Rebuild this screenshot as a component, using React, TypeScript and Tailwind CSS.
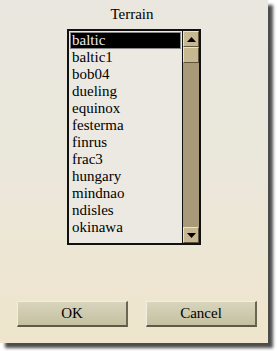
const terrains = [
  "baltic",
  "baltic1",
  "bob04",
  "dueling",
  "equinox",
  "festerma",
  "finrus",
  "frac3",
  "hungary",
  "mindnao",
  "ndisles",
  "okinawa",
];

function ScrollButton({ dir }: { dir: "up" | "down" | "none" }) {
  return (
    <div className="h-[16px] w-full flex items-center justify-center bg-[#c7b892] border-t border-l border-[#ece2c6] border-b border-r border-b-[#5f553d] border-r-[#5f553d]">
      {dir === "up" && (
        <svg width="9" height="5" viewBox="0 0 9 5">
          <polygon points="0,5 9,5 4.5,0" fill="#000" />
        </svg>
      )}
      {dir === "down" && (
        <svg width="9" height="5" viewBox="0 0 9 5">
          <polygon points="0,0 9,0 4.5,5" fill="#000" />
        </svg>
      )}
    </div>
  );
}

function Button({ label }: { label: string }) {
  return (
    <button className="w-[111px] h-[26px] flex items-center justify-center bg-gradient-to-b from-[#d8d5bd] to-[#c4c0a1] border-t border-l border-[#f1eee0] border-b-2 border-r-2 border-b-[#5d5a48] border-r-[#6a6653] font-['Liberation_Serif',serif] text-[15px] leading-none text-black">
      {label}
    </button>
  );
}

export default function App() {
  return (
    <div className="w-[277px] h-[351px] bg-white">
      <div className="relative w-[268px] h-[343px] flex flex-col bg-gradient-to-b from-[#e9e7df] via-[#ebe7db] to-[#efe5cc] shadow-[5px_5px_3px_rgba(0,0,0,0.7)] font-['Liberation_Serif',serif]">
        <div className="pt-[6px] pr-[4px] text-center text-[15px] leading-[17px] text-black">
          Terrain
        </div>

        <div className="mt-[6px] ml-[67px] w-[134px] h-[216px] border-2 border-[#111] flex">
          <div className="flex-1 bg-[#ebe9e2] pt-px px-px">
            {terrains.map((t, i) => (
              <div
                key={t}
                className={
                  i === 0
                    ? "h-[17px] pl-px text-[15px] leading-[17px] text-[#ececec] bg-black border border-[#8a8a8a] flex items-center"
                    : "h-[17px] pl-[2px] text-[15px] leading-[17px] text-black flex items-center"
                }
              >
                {t}
              </div>
            ))}
          </div>
          <div className="w-[17px] border-l border-[#111] bg-[#a89a79] flex flex-col justify-between">
            <div>
              <ScrollButton dir="up" />
              <ScrollButton dir="none" />
            </div>
            <ScrollButton dir="down" />
          </div>
        </div>

        <div className="mt-auto mb-[16px] ml-[17px] flex gap-[18px]">
          <Button label="OK" />
          <Button label="Cancel" />
        </div>
      </div>
    </div>
  );
}
